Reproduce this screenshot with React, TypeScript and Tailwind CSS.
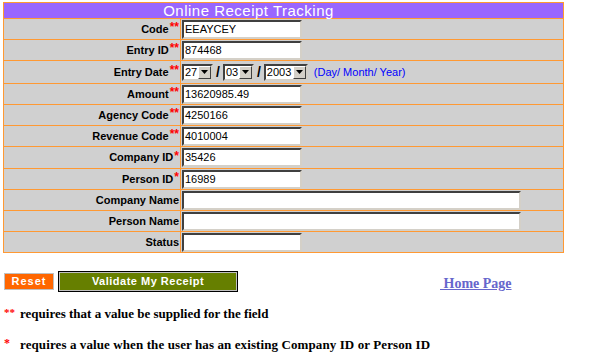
import React from "react";

const rows: { label: string; req: string; value: string; wide?: boolean; date?: boolean; h: string }[] = [
  { label: "Code", req: "**", value: "EEAYCEY", h: "h-[21px]" },
  { label: "Entry ID", req: "**", value: "874468", h: "h-[21px]" },
  { label: "Entry Date", req: "**", value: "", date: true, h: "h-[23px]" },
  { label: "Amount", req: "**", value: "13620985.49", h: "h-[21px]" },
  { label: "Agency Code", req: "**", value: "4250166", h: "h-[21px]" },
  { label: "Revenue Code", req: "**", value: "4010004", h: "h-[21px]" },
  { label: "Company ID", req: "*", value: "35426", h: "h-[22px]" },
  { label: "Person ID", req: "*", value: "16989", h: "h-[21px]" },
  { label: "Company Name", req: "", value: "", wide: true, h: "h-[21px]" },
  { label: "Person Name", req: "", value: "", wide: true, h: "h-[21px]" },
  { label: "Status", req: "", value: "", h: "h-[21px]" },
];

function TextBox({ value, wide }: { value: string; wide?: boolean }) {
  return (
    <div
      className={`${wide ? "w-[339px]" : "w-[120px]"} h-[19px] bg-white border-2 border-t-[#404040] border-l-[#404040] border-b-[#d4d0c8] border-r-[#d4d0c8] pl-[1px] text-[11px] leading-[15px] text-black font-['Liberation_Sans',sans-serif]`}
    >
      {value}
    </div>
  );
}

function Select({ value, w }: { value: string; w: string }) {
  return (
    <div
      className={`${w} h-[17px] flex bg-white border-2 border-t-[#404040] border-l-[#404040] border-b-[#d4d0c8] border-r-[#d4d0c8]`}
    >
      <span className="flex-1 pl-[1px] text-[11px] leading-[13px] font-['Liberation_Sans',sans-serif]">{value}</span>
      <span className="w-[13px] h-[13px] bg-[#d4d0c8] border border-t-white border-l-white border-b-[#404040] border-r-[#404040] flex items-center justify-center">
        <svg width="7" height="4" viewBox="0 0 7 4">
          <polygon points="0,0 7,0 3.5,4" fill="#000" />
        </svg>
      </span>
    </div>
  );
}

export default function App() {
  return (
    <div className="w-[590px] h-[354px] bg-white font-['Liberation_Sans',sans-serif] pt-[2px] overflow-hidden">
      {/* Form table */}
      <div className="ml-[3px] w-[561px] border border-[#ff9933]">
        <div className="h-[15px] bg-[#9966ff] text-white text-center text-[15px] leading-[15px] tracking-[0.5px] pr-[70px]">
          Online Receipt Tracking
        </div>
        {rows.map((r) => (
          <div key={r.label} className={`grid grid-cols-[177px_1fr] border-t border-[#ff9933] bg-[#d0d0d0] ${r.h}`}>
            <div className="border-r border-[#ff9933] flex items-center justify-end pr-[1px] text-[11px] font-bold text-black">
              {r.label}
              {r.req && <span className="text-[#ff0000] text-[12px] ml-[1px] -mt-[4px]">{r.req}</span>}
            </div>
            <div className="flex items-center pl-[1px]">
              {r.date ? (
                <div className="flex items-center">
                  <Select value="27" w="w-[31px]" />
                  <span className="mx-[3px] text-[14px] font-bold">/</span>
                  <Select value="03" w="w-[31px]" />
                  <span className="mx-[3px] text-[14px] font-bold">/</span>
                  <Select value="2003" w="w-[44px]" />
                  <span className="ml-[6px] text-[11px] text-[#0000ff]">(Day/ Month/ Year)</span>
                </div>
              ) : (
                <TextBox value={r.value} wide={r.wide} />
              )}
            </div>
          </div>
        ))}
      </div>

      {/* Buttons */}
      <div className="flex items-center mt-[16px] ml-[4px]">
        <div className="w-[50px] h-[17px] bg-[#ff6600] border border-[#c0c0c0] text-white font-bold text-[11px] leading-[15px] text-center tracking-[1px]">
          Reset
        </div>
        <div className="ml-[4px] w-[180px] h-[21px] border border-black p-[1px] bg-[#c0c0c0]">
          <div className="h-full bg-[#667f00] text-white font-bold text-[11px] leading-[17px] text-center tracking-[0.5px]">
            Validate My Receipt
          </div>
        </div>
        <a className="ml-[202px] mt-[4px] text-[#6666cc] underline font-bold text-[14px] font-['Liberation_Serif',serif]">
          &nbsp;Home Page
        </a>
      </div>

      {/* Notes */}
      <div className="mt-[10px] ml-[4px] font-['Liberation_Serif',serif] font-bold text-[13px] text-black">
        <div className="flex items-center">
          <span className="text-[#ff0000] text-[11px] -mt-[4px] w-[16px]">**</span>
          <span>requires that a value be supplied for the field</span>
        </div>
        <div className="flex items-center mt-[11px]">
          <span className="text-[#ff0000] text-[12px] -mt-[2px] w-[16px]">*</span>
          <span className="tracking-[0.1px]">requires a value when the user has an existing Company ID or Person ID</span>
        </div>
      </div>
    </div>
  );
}
